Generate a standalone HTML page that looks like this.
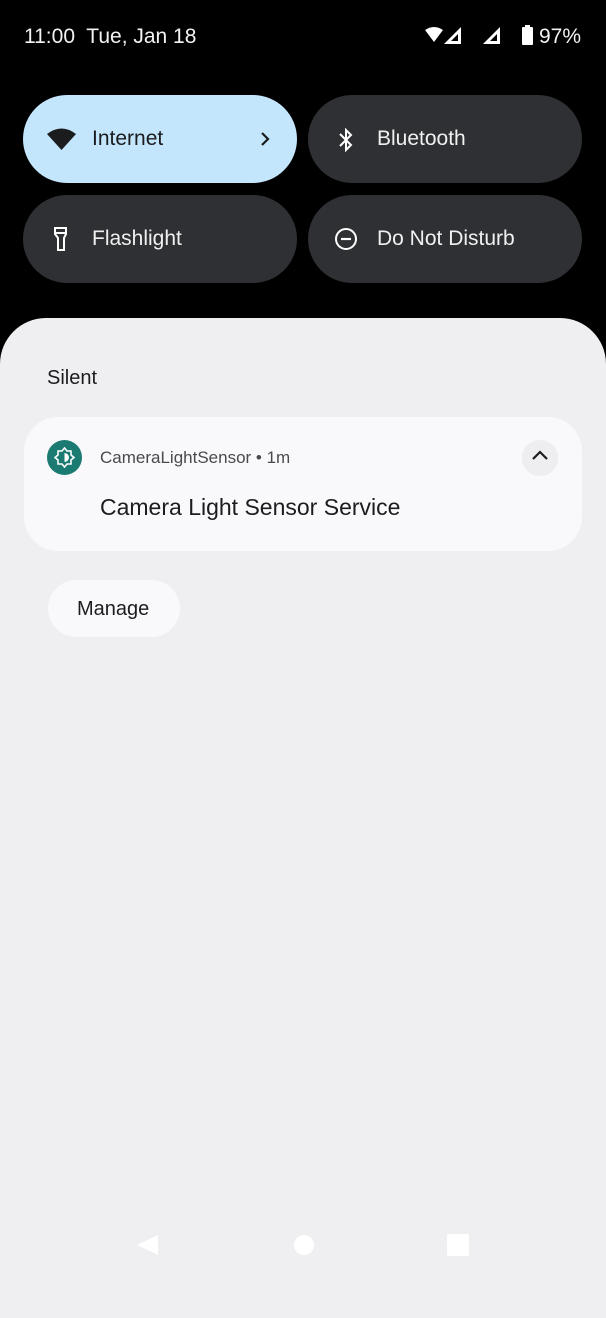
<!DOCTYPE html>
<html><head><meta charset="utf-8"><style>
*{margin:0;padding:0;box-sizing:border-box}
body{width:606px;height:1280px;background:#000;position:relative;overflow:hidden;font-family:"Liberation Sans",sans-serif}
.abs{position:absolute}
.tile{position:absolute;height:88px;width:274px;border-radius:44px;background:#2e3033;color:#f0f0f0;font-size:21px}
.tile span{position:absolute;left:69px;top:32px}
.tile svg{position:absolute}
</style></head><body>
<div class="abs" style="left:24px;top:25px;color:#f2f2f2;font-size:21px">11:00&nbsp; Tue, Jan 18</div>
<svg class="abs" style="left:424px;top:26px" width="60" height="20" viewBox="0 0 60 20">
<path d="M1 4 Q10 -2 19 4 L10 16 Z" fill="#fff"/>
<path d="M37 1 L37 18 L20 18 Z M34 8 L34 15 L27 15 Z" fill="#fff" fill-rule="evenodd"/>
</svg>
<svg class="abs" style="left:480px;top:26px" width="22" height="20" viewBox="0 0 22 20"><path d="M20 1 L20 18 L3 18 Z M17 8 L17 15 L10 15 Z" fill="#fff" fill-rule="evenodd"/></svg>
<div class="abs" style="left:522px;top:27px;width:11px;height:18px;background:#fff;border-radius:1px"></div>
<div class="abs" style="left:525px;top:25px;width:5px;height:3px;background:#fff"></div>
<div class="abs" style="left:539px;top:25px;color:#f2f2f2;font-size:21px">97%</div>

<div class="tile" style="left:23px;top:95px;background:#c4e6fd;color:#1a1c1e"><svg style="left:23px;top:32px" width="31" height="24" viewBox="0 0 31 24"><path d="M1 7 Q15.5 -4 30 7 L15.5 23 Z" fill="#1a1c1e"/></svg><span>Internet</span><svg style="left:236px;top:36px" width="12" height="16" viewBox="0 0 12 16"><path d="M3 2 L9 8 L3 14" stroke="#1a1c1e" stroke-width="2.2" fill="none"/></svg></div>
<div class="tile" style="left:308px;top:95px"><svg style="left:28px;top:32px" width="20" height="26" viewBox="0 0 20 26"><path d="M4 7 L15 18 L10 23 L10 3 L15 8 L4 19" stroke="#fff" stroke-width="2" fill="none"/></svg><span>Bluetooth</span></div>
<div class="tile" style="left:23px;top:195px"><svg style="left:28px;top:30px" width="20" height="28" viewBox="0 0 20 28"><path d="M4 3 H15 V9 L13 13 V25 H7 V13 L4 9 Z M4 8 H15" stroke="#fff" stroke-width="2" fill="none"/></svg><span>Flashlight</span></div>
<div class="tile" style="left:308px;top:195px"><svg style="left:26px;top:32px" width="24" height="24" viewBox="0 0 24 24"><circle cx="12" cy="12" r="10" stroke="#fff" stroke-width="2" fill="none"/><path d="M7 12 H17" stroke="#fff" stroke-width="2.2"/></svg><span>Do Not Disturb</span></div>

<div class="abs" style="left:0;top:318px;width:606px;height:1000px;background:#efeff1;border-radius:46px 46px 0 0"></div>
<div class="abs" style="left:47px;top:367px;color:#1c1c1e;font-size:20px">Silent</div>
<div class="abs" style="left:24px;top:417px;width:558px;height:134px;background:#f9f9fb;border-radius:34px"></div>
<div class="abs" style="left:47px;top:440px;width:35px;height:35px;border-radius:50%;background:#1b7a72"></div>
<svg class="abs" style="left:53px;top:446px" width="23" height="23" viewBox="0 0 23 23"><path d="M11.5 2 L14 5 L18 5 L18 9 L21 11.5 L18 14 L18 18 L14 18 L11.5 21 L9 18 L5 18 L5 14 L2 11.5 L5 9 L5 5 L9 5 Z" stroke="#fff" stroke-width="1.6" fill="none"/><path d="M11.5 7 A4.5 4.5 0 0 1 11.5 16 Z" fill="#fff"/></svg>
<div class="abs" style="left:100px;top:448px;color:#4a4a4c;font-size:17px">CameraLightSensor • 1m</div>
<div class="abs" style="left:522px;top:440px;width:36px;height:36px;border-radius:50%;background:#eeeef0"></div>
<svg class="abs" style="left:530px;top:448px" width="20" height="16" viewBox="0 0 20 16"><path d="M3 11 L10 4 L17 11" stroke="#1c1c1e" stroke-width="2.2" fill="none"/></svg>
<div class="abs" style="left:100px;top:494px;color:#1c1c1e;font-size:23px">Camera Light Sensor Service</div>
<div class="abs" style="left:48px;top:580px;width:132px;height:57px;background:#f9f9fb;border-radius:29px"></div>
<div class="abs" style="left:77px;top:598px;color:#1c1c1e;font-size:20px">Manage</div>

<svg class="abs" style="left:134px;top:1232px" width="26" height="26" viewBox="0 0 26 26"><path d="M3 13 L24 3 L24 23 Z" fill="#fff"/></svg>
<div class="abs" style="left:294px;top:1235px;width:20px;height:20px;border-radius:50%;background:#fff"></div>
<div class="abs" style="left:447px;top:1234px;width:22px;height:22px;border-radius:2px;background:#fff"></div>
</body></html>
